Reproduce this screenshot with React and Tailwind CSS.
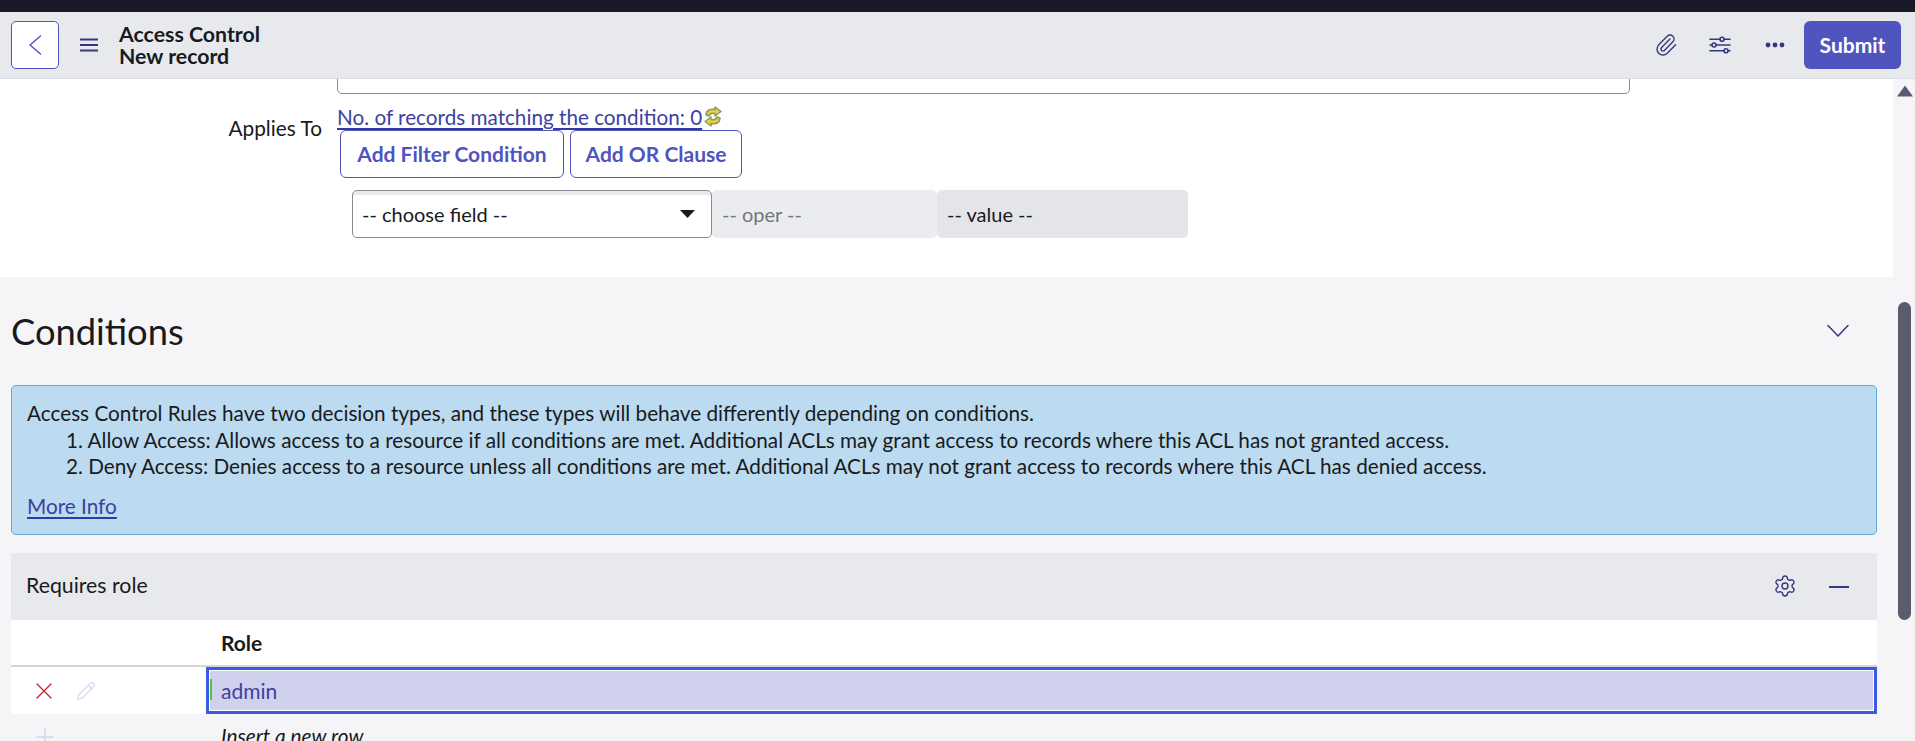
import React from "react";
import { Paperclip, Settings, Pencil } from "lucide-react";

const Icon = ({ children, className = "", w = 24, h = 24, vb = "0 0 24 24", stroke = "#34387f", sw = 1.5 }) => (
  <svg width={w} height={h} viewBox={vb} fill="none" stroke={stroke} strokeWidth={sw} strokeLinecap="round" strokeLinejoin="round" className={className}>{children}</svg>
);

export default function App() {
  return (
    <div className="w-[1915px] h-[741px] overflow-hidden flex flex-col bg-[#f5f5f8] text-[#181a20] font-['Lato','Noto_Sans',sans-serif]">
      <div className="h-3 bg-[#181826] shrink-0" />
      <header className="h-[67px] shrink-0 bg-[#e8e9ed] border-b border-[#dcdde2] flex items-center pl-[11px] pr-[14px]">
        <button className="w-12 h-12 rounded-[5px] bg-white border border-[#5054bf] flex items-center justify-center">
          <Icon w={14} h={22} vb="0 0 14 22" stroke="#5054bf"><path d="M12.500 2 L2 11 L12.500 20" /></Icon>
        </button>
        <Icon className="ml-[21px]" w={18} h={14} vb="0 0 18 14" sw={2}><path d="M0 1.500h18M0 7h18M0 12.500h18" strokeLinecap="butt" /></Icon>
        <div className="ml-[21px] text-[21.300px] font-bold leading-[22px]">
          <div>Access Control</div>
          <div>New record</div>
        </div>
        <div className="ml-auto flex items-center">
          <Paperclip size={24} color="#34387f" strokeWidth={1.4} />
          <Icon className="ml-[30px]" w={24} h={24} sw={1.6}>
            <path d="M2 6.200h10M16 6.200h6M2 12h2M8 12h14M2 17.800h14M20 17.800h2" />
            <circle cx="14" cy="6.200" r="2" /><circle cx="6" cy="12" r="2" /><circle cx="18" cy="17.800" r="2" />
          </Icon>
          <svg className="ml-[33px]" width="20" height="6" viewBox="0 0 20 6" fill="#34387f"><circle cx="3" cy="3" r="2.400" /><circle cx="10" cy="3" r="2.400" /><circle cx="17" cy="3" r="2.400" /></svg>
          <button className="ml-[19px] w-[97px] h-12 rounded-[6px] bg-[#5054bf] text-white text-[21px] font-bold">Submit</button>
        </div>
      </header>

      <div className="flex-1 min-h-0 flex">
        <main className="w-[1893px] shrink-0 min-w-0 flex flex-col">
          <section className="h-[198px] shrink-0 bg-white relative overflow-hidden">
            <div className="absolute left-[337px] top-[-20px] w-[1293px] h-[35px] rounded-[5px] border border-[#878b94]" />
            <div className="pt-[24px] flex">
              <div className="w-[322px] text-right text-[20.800px] leading-[24px] pt-[13px]">Applies To</div>
              <div className="ml-[15px]">
                <div className="flex items-center h-[27px]">
                  <a className="text-[20.700px] leading-[24px] text-[#3c429f] underline decoration-2 underline-offset-[3px] decoration-[#2f3aa5]">No. of records matching the condition: 0</a>
                  <svg width="20" height="22" viewBox="0 0 20 22" className="ml-[1px]">
                    <path d="M3 9C3 4 8 2.500 12 3.500V1l6 4.500-6 4.500V7.500C9 7 6.500 7.500 6 10z" fill="#e6d23c" stroke="#8a9a62" strokeWidth="1.500" strokeLinejoin="round" />
                    <path d="M17 12c0 5-5 6.500-9 5.500V20l-6-4.500L8 11v2.500c3 .5 5.500 0 6-2.500z" fill="#e6d23c" stroke="#8a9a62" strokeWidth="1.500" strokeLinejoin="round" />
                  </svg>
                </div>
                <div className="flex ml-[3px] gap-[6px]">
                  <button className="h-[48px] w-[224px] rounded-[6px] border border-[#5054bf] bg-white text-[#5054bf] font-bold text-[21px]">Add Filter Condition</button>
                  <button className="h-[48px] w-[172px] rounded-[6px] border border-[#5054bf] bg-white text-[#5054bf] font-bold text-[21px]">Add OR Clause</button>
                </div>
                <div className="flex ml-[15px] mt-[12px] text-[20px]">
                  <div className="w-[360px] h-[48px] rounded-[5px] border border-[#878b94] bg-white shadow-[inset_0_4px_0_#e8eaec] flex items-center justify-between pl-[9px] pr-[16px]">
                    <span>-- choose field --</span>
                    <svg width="15" height="8" viewBox="0 0 15 8" fill="#181a20"><path d="M0 0h15L7.500 8z" /></svg>
                  </div>
                  <div className="w-[225px] h-[48px] rounded-[5px] bg-[#ebecef] text-[#73757c] flex items-center pl-[10px]">-- oper --</div>
                  <div className="w-[251px] h-[48px] rounded-[5px] bg-[#e4e5e9] flex items-center pl-[10px]">-- value --</div>
                </div>
              </div>
            </div>
          </section>

          <section className="pl-[11px] pr-[16px] flex-1 min-h-0">
            <div className="h-[108px] flex items-center justify-between">
              <h2 className="text-[36.300px] font-normal">Conditions</h2>
              <Icon className="mr-[27px]" w={24} h={16} vb="0 0 24 16" sw={1.5}><path d="M2 2.500 L12 13 L22 2.500" /></Icon>
            </div>
            <div className="h-[150px] rounded-[5px] border border-[#62a9dd] bg-[#bcdaf0] px-[15px] pt-[14px] text-[20.740px] leading-[26.700px]">
              <div>Access Control Rules have two decision types, and these types will behave differently depending on conditions.</div>
              <div className="pl-[39px]">1. Allow Access: Allows access to a resource if all conditions are met. Additional ACLs may grant access to records where this ACL has not granted access.</div>
              <div className="pl-[39px]">2. Deny Access: Denies access to a resource unless all conditions are met. Additional ACLs may not grant access to records where this ACL has denied access.</div>
              <a className="block mt-[13px] text-[#3c429f] underline decoration-2 underline-offset-[3px] decoration-[#2f3aa5]">More Info</a>
            </div>

            <div className="mt-[18px] h-[67px] bg-[#e8e9ed] flex items-center pl-[15px]">
              <span className="text-[21.300px] -mt-[1px]">Requires role</span>
              <Settings className="ml-auto -mt-[1px]" size={24} color="#34387f" strokeWidth={1.4} />
              <div className="w-[20px] h-[2px] bg-[#34387f] ml-[32px] mr-[28px]" />
            </div>
            <div className="h-[47px] bg-white border-b-2 border-[#d5d6dc] flex items-center">
              <span className="ml-[210px] text-[21px] font-bold">Role</span>
            </div>
            <div className="h-[47px] bg-white flex">
              <div className="w-[195px] shrink-0 flex items-center">
                <Icon className="ml-[24px]" w={18} h={18} vb="0 0 18 18" stroke="#c8242c" sw={1.4}><path d="M2 2l14 14M16 2 2 16" /></Icon>
                <Pencil className="ml-[23px]" size={20} color="#d2d2ee" strokeWidth={1.3} />
              </div>
              <div className="flex-1 min-w-0 border-[3px] border-[#3b5be0] bg-white p-[1px]">
                <div className="h-full bg-[#d0d1ec] flex items-center relative pl-[11px]">
                  <div className="absolute left-0 top-[8px] bottom-[10px] w-[2px] bg-[#4cc93a]" />
                  <span className="text-[21px] text-[#3c429f]">admin</span>
                </div>
              </div>
            </div>
            <div className="h-[27px] overflow-hidden flex items-start">
              <Icon className="ml-[25px] mt-[14px] shrink-0" w={18} h={18} vb="0 0 18 18" stroke="#d2d2ee" sw={1.3}><path d="M9 1v16M1 9h16" /></Icon>
              <span className="ml-[167px] mt-[10px] text-[20.800px] leading-[24px] italic whitespace-nowrap">Insert a new row...</span>
            </div>
          </section>
        </main>

        <aside className="w-[22px] shrink-0 relative">
          <svg width="16" height="12" viewBox="0 0 16 12" className="absolute left-[4px] top-[6px]" fill="#5c5b6e"><path d="M8 .5 16 11.500H0z" /></svg>
          <div className="absolute left-[5px] top-[223px] w-[13px] h-[318px] rounded-[7px] bg-[#5c5b6e]" />
        </aside>
      </div>
    </div>
  );
}
